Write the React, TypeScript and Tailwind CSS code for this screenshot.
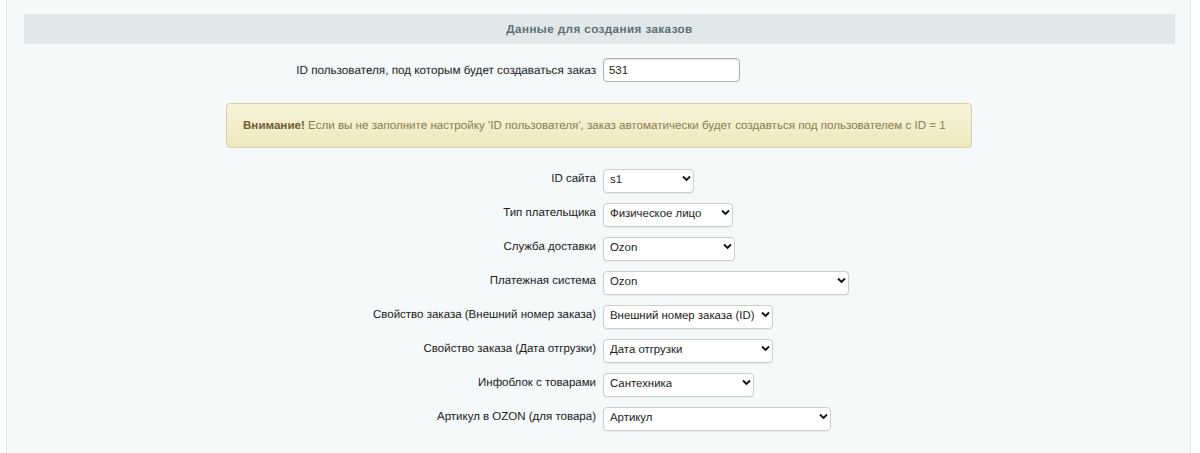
const rows = [
  { label: "ID сайта", value: "s1", width: "w-[91px]" },
  { label: "Тип плательщика", value: "Физическое лицо", width: "w-[130px]" },
  { label: "Служба доставки", value: "Ozon", width: "w-[132px]" },
  { label: "Платежная система", value: "Ozon", width: "w-[246px]" },
  { label: "Свойство заказа (Внешний номер заказа)", value: "Внешний номер заказа (ID)", width: "w-[170px]" },
  { label: "Свойство заказа (Дата отгрузки)", value: "Дата отгрузки", width: "w-[170px]" },
  { label: "Инфоблок с товарами", value: "Сантехника", width: "w-[151px]" },
  { label: "Артикул в OZON (для товара)", value: "Артикул", width: "w-[228px]" },
];

function SelectBox({ value, width }: { value: string; width: string }) {
  return (
    <div className={`relative h-6 ${width}`}>
      <select
        defaultValue={value}
        className="w-full h-full appearance-none bg-white border border-[#c9ced0] rounded-[4px] pl-[6px] pr-3 text-[11.4px] text-[#222] shadow-[0_1px_1px_rgba(0,0,0,0.06)] outline-none [text-rendering:geometricPrecision]"
      >
        <option>{value}</option>
      </select>
      <svg className="absolute right-[3px] top-[8px] w-[9px] h-[7px] pointer-events-none" viewBox="0 0 9 7" fill="none" stroke="#111" strokeWidth="1.8">
        <path d="M1 1.5l3.5 3.5L8 1.5" />
      </svg>
    </div>
  );
}

export default function App() {
  return (
    <div className="h-[453px] overflow-hidden bg-white pl-[6px] pr-[9px] font-['Liberation_Sans',Arial,sans-serif] [text-rendering:geometricPrecision]">
      <div className="h-full bg-[#f5f9f9] border-x border-[#e0e8ea] pt-[14px] pl-[17px] pr-[15px]">
        <div className="h-[30px] pt-px bg-[#e0e8ea] flex items-center justify-center text-[11.7px] tracking-[0.4px] font-bold text-[#5e7175]">
          Данные для создания заказов
        </div>

        <div className="mt-[14px] flex items-center gap-[7px]">
          <label className="w-[572px] pt-px text-right text-[11.7px] text-[#222]">
            ID пользователя, под которым будет создаваться заказ
          </label>
          <input
            defaultValue="531"
            className="w-[137px] h-6 bg-white border border-[#a9b0b3] rounded-[4px] px-[5px] text-[11.4px] text-[#222] shadow-[inset_0_1px_1px_rgba(0,0,0,0.1)] outline-none"
          />
        </div>

        <div className="ml-[202px] mt-[21px] w-[746px] h-[45px] pt-px flex items-center px-4 rounded-[4px] border border-[#d9cfa8] bg-gradient-to-b from-[#f7f4da] to-[#efe8bd] text-[11.6px] text-[#8a7c52]">
          <p>
            <b className="text-[#6f6136]">Внимание!</b> Если вы не заполните настройку 'ID пользователя', заказ автоматически будет создавться под пользователем с ID = 1
          </p>
        </div>

        <div className="mt-[19px] flex flex-col gap-[10px]">
          {rows.map((row) => (
            <div key={row.label} className="flex items-center gap-[7px]">
              <label className="w-[572px] pt-px text-right text-[11.5px] text-[#222]">{row.label}</label>
              <SelectBox value={row.value} width={row.width} />
            </div>
          ))}
        </div>
      </div>
    </div>
  );
}
